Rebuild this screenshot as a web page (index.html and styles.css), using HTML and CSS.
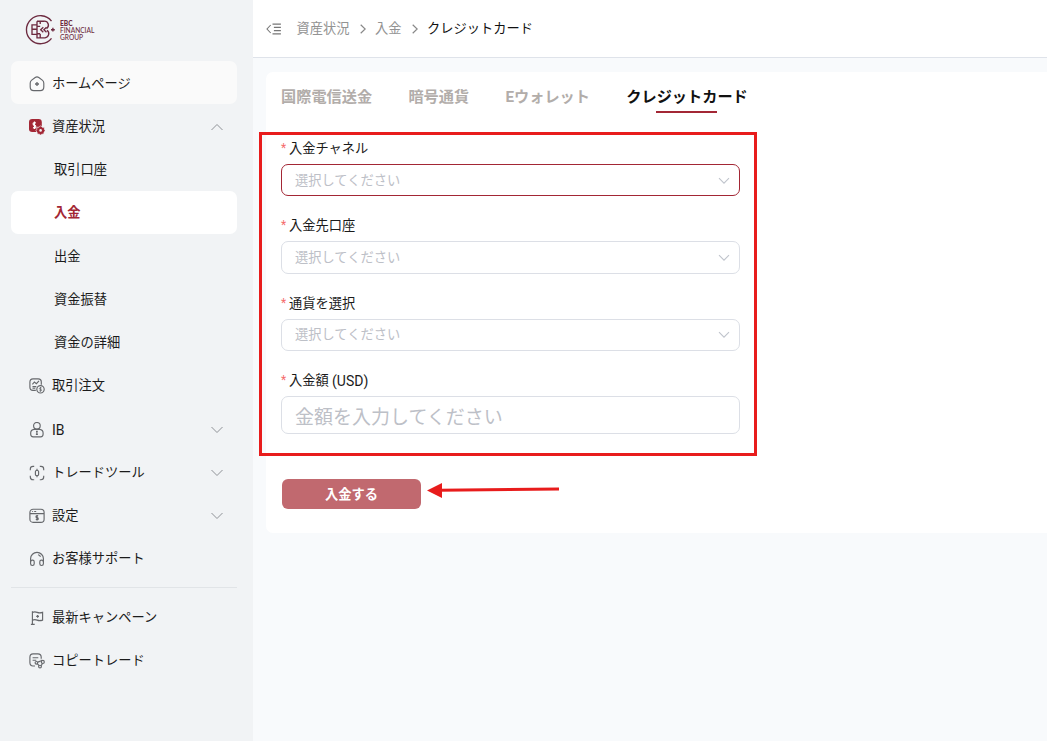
FILE: index.html
```html
<!DOCTYPE html>
<html lang="ja">
<head>
<meta charset="utf-8">
<title>クレジットカード</title>
<link rel="stylesheet" href="styles.css">
</head>
<body>
<div class="app">
  <aside class="sidebar">
    <div class="logo">
      <svg class="logo-mark" viewBox="0 0 32 32">
        <path d="M26.5 7.1A14 14 0 1 0 26.5 24.3"/>
        <path d="M12 7.2h7.3a4 4 0 0 1 2.2 7.4M12 7.2v5.2h3.2M12 12.2v11.6h8a4.2 4.2 0 0 0 2-7.6M12 10.8H7v9.5h5M7 15.2h5M15.2 8v2M15.2 20v3.5M12 19.7h3.2"/>
        <path d="M18.3 13.2l-2.6 2.5 2.6 2.5M21.5 13.2l-2.6 2.5 2.6 2.5"/>
        <path d="M27.9 13.8v3.8M26 15.7h3.8"/>
      </svg>
      <div class="logo-text"><b>EBC</b><span>FINANCIAL</span><span>GROUP</span></div>
    </div>
    <nav class="nav">
      <a class="item home">
        <svg class="icon" viewBox="0 0 16 16"><path d="M6.2 1.5Q8 .2 9.8 1.5L13.6 4.4Q14.8 5.4 14.8 7.2V11Q14.8 14.6 11.2 14.6H4.8Q1.2 14.6 1.2 11V7.2Q1.2 5.4 2.4 4.4Z"/><path d="M8 6v4M6 8h4" stroke-width="1.3"/></svg>
        <span>ホームページ</span>
      </a>
      <a class="item">
        <svg class="icon solid" viewBox="0 0 16 16"><rect x="0" y="0" width="12.8" height="13" rx="3.2" fill="#a32735" stroke="none"/><path d="M6.9 3.9Q4.1 3.1 4.1 4.7T5.5 6.3T6.9 8T4 8.6M5.5 2.4v7.6"  stroke="#fff"/><path d="M11.6 6.7l1.5 1.5 2.2.1.1 2.1.9 1.4-1.2 1.3-.3 2-2 .1-1.2.9-1.3-.9-2-.1-.3-2-1.1-1.3.9-1.5.1-2 2.2-.1z" fill="#a32735" stroke="#f1f3f5" stroke-width=".7"/><circle cx="11.6" cy="11.4" r="1.3" fill="#f1f3f5" stroke="none"/></svg>
        <span>資産状況</span>
        <svg class="chev" viewBox="0 0 12 8"><path d="M.5 7L6 1.5 11.5 7"/></svg>
      </a>
      <a class="item sub">取引口座</a>
      <a class="item sub active">入金</a>
      <a class="item sub">出金</a>
      <a class="item sub">資金振替</a>
      <a class="item sub">資金の詳細</a>
      <a class="item">
        <svg class="icon" viewBox="0 0 16 16"><path d="M6.8 12.3H4Q.9 12.3.9 9.2V4Q.9.8 4 .8h5.2q3.1 0 3.1 3.2v2.7M3.4 6.4l2-2.4 2 1.6 2.6-2.8M3.5 8.6h3.8M3.5 10.2h2.8"/><circle cx="11.5" cy="11.3" r="3.7"/><path d="M12.6 9.9q-2.2-.6-2.2.5t1.1 1 1.1 1-2.3.4M11.5 9v4.6" stroke-width=".8"/></svg>
        <span>取引注文</span>
      </a>
      <a class="item">
        <svg class="icon" viewBox="0 0 16 16"><circle cx="7.9" cy="3.8" r="3.3"/><path d="M5.2 7.4h5.4q3.5.5 3.5 3.5v1.4q0 2.5-2.5 2.5H4.2q-2.5 0-2.5-2.5v-1.4q0-3 3.5-3.5zM7.9 9.2v3.3M7 9.3h1.8M6.9 12.4h2"/></svg>
        <span class="latin">IB</span>
        <svg class="chev" viewBox="0 0 12 8"><path d="M.5 1L6 6.5 11.5 1"/></svg>
      </a>
      <a class="item">
        <svg class="icon" viewBox="0 0 16 16"><path d="M1.3 5.3V4q0-2.7 2.7-2.7h1.2M10.8 1.3H12q2.7 0 2.7 2.7v1.3M14.7 10.7V12q0 2.7-2.7 2.7h-1.2M5.2 14.7H4Q1.3 14.7 1.3 12v-1.3M8 3.7v1.8M8 10.5v1.8"/><rect x="6.4" y="5.5" width="3.2" height="5" rx="1"/></svg>
        <span>トレードツール</span>
        <svg class="chev" viewBox="0 0 12 8"><path d="M.5 1L6 6.5 11.5 1"/></svg>
      </a>
      <a class="item">
        <svg class="icon" viewBox="0 0 16 16"><rect x=".9" y="1.2" width="14.2" height="13.2" rx="3.2"/><path d="M1 5.6h14M3.2 3.5h.9M5.2 3.5h2M9.2 7.8Q7 7.4 7 8.6t1.1 1.1 1.1 1.2-2.4.5M8.1 7v5.6"/></svg>
        <span>設定</span>
        <svg class="chev" viewBox="0 0 12 8"><path d="M.5 1L6 6.5 11.5 1"/></svg>
      </a>
      <a class="item">
        <svg class="icon" viewBox="0 0 16 16"><path d="M1.6 11V7.6a6.4 6.2 0 0 1 12.8 0V11"/><rect x="1.6" y="9.1" width="3.6" height="5.4" rx="1.7"/><rect x="10.8" y="9.1" width="3.6" height="5.4" rx="1.7"/><path d="M9 3.7q1.9.4 2.5 2.1"/></svg>
        <span>お客様サポート</span>
      </a>
    </nav>
    <div class="divider"></div>
    <nav class="nav">
      <a class="item">
        <svg class="icon" viewBox="0 0 16 16"><path d="M3.4 1.2v13M1.9 14.4h3.8M3.4 2.4q2.4-1 4.8 0t5.4 0v7.7q-3 1-5.4 0t-4.8 0" /><path d="M8.6 4.9v2.8M7.2 6.3H10" stroke-width="1.2"/></svg>
        <span>最新キャンペーン</span>
      </a>
      <a class="item">
        <svg class="icon" viewBox="0 0 16 16"><path d="M6 13H4Q.9 13 .9 9.6V4.2Q.9.9 4 .9h4.9Q12.2.9 12.2 4.2v1.6M3.6 4.7h5.7M3.6 7.2h3.7"/><circle cx="7.4" cy="9.8" r="1.3"/><circle cx="11" cy="13.6" r="1.4"/><path d="M8.3 10.7l1.8 1.9M12.2 12.8l1.2-2.4M12.2 6.7l.1 1.4M8.6 9.1l3-1"/><circle cx="13.8" cy="8.9" r="1.5"/></svg>
        <span>コピートレード</span>
      </a>
    </nav>
  </aside>
  <main class="main">
    <header class="header">
      <svg class="fold" viewBox="0 0 16 12"><path d="M4.7 2L1 6l3.7 4M6.5 1.1h8.4M7.9 4.4h7M7.9 7.6h7M6.5 10.9h8.4"/></svg>
      <span class="crumb">資産状況</span>
      <svg class="sep" viewBox="0 0 6 10"><path d="M.7.7L5.2 5 .7 9.3"/></svg>
      <span class="crumb">入金</span>
      <svg class="sep" viewBox="0 0 6 10"><path d="M.7.7L5.2 5 .7 9.3"/></svg>
      <span class="crumb current">クレジットカード</span>
    </header>
    <section class="card">
      <div class="tabs">
        <span class="tab">国際電信送金</span>
        <span class="tab">暗号通貨</span>
        <span class="tab">Eウォレット</span>
        <span class="tab selected">クレジットカード</span>
      </div>
      <form class="form">
        <div class="field">
          <label><i>*</i>入金チャネル</label>
          <div class="control focus"><span>選択してください</span><svg viewBox="0 0 12 8"><path d="M1 1.2l5 5 5-5"/></svg></div>
        </div>
        <div class="field">
          <label><i>*</i>入金先口座</label>
          <div class="control"><span>選択してください</span><svg viewBox="0 0 12 8"><path d="M1 1.2l5 5 5-5"/></svg></div>
        </div>
        <div class="field">
          <label><i>*</i>通貨を選択</label>
          <div class="control"><span>選択してください</span><svg viewBox="0 0 12 8"><path d="M1 1.2l5 5 5-5"/></svg></div>
        </div>
        <div class="field">
          <label><i>*</i>入金額&nbsp;<span class="latin">(USD)</span></label>
          <div class="control large"><span>金額を入力してください</span></div>
        </div>
        <div class="submit">入金する</div>
      </form>
    </section>
  </main>
  <div class="highlight"></div>
  <svg class="arrow" viewBox="0 0 134 16"><path d="M12 8.3L132 7" stroke="#e81c1c" stroke-width="3"/><path d="M0 8.5L15 1v15z" fill="#e81c1c"/></svg>
</div>
</body>
</html>
```
FILE: styles.css
```css
* { box-sizing: border-box; }
body { margin: 0; background: #f8fafc; }
svg { display: block; fill: none; flex: none; }
.app {
  position: relative; display: flex; width: 1047px; height: 741px; overflow: hidden;
  font-family: Roboto, "Noto Sans CJK JP", sans-serif; font-size: 13.25px; line-height: 20px; color: #1b1b1b;
  white-space: nowrap;
}
.sidebar { width: 253px; flex: none; background: #f1f3f5; padding: 0 16px 0 11px; }
.logo { height: 61px; padding: 14px 0 0 14px; display: flex; gap: 3px; }
.logo-mark { width: 32px; height: 32px; stroke: #6d2b40; stroke-width: 1.35; }
.logo-text { display: flex; flex-direction: column; padding-top: 6px; font-size: 6.6px; line-height: 7px; color: #6d2b40; font-family: Lato, sans-serif; font-weight: 500; }
.logo-text b { font-weight: 900; }
.item { display: flex; align-items: center; height: 43.25px; padding: 2px 14px 0 18px; border-radius: 7px; }
.item .icon { width: 16px; height: 16px; margin-right: 7px; stroke: #66686c; stroke-width: 1.15; }
.home { background: #fafafa; }
.sub { padding-left: 43px; }
.active { background: #fff; color: #a32735; font-weight: 700; }
.latin { font-size: 14px; }
.chev { width: 12px; height: 8px; margin-left: auto; stroke: #8e9196; stroke-width: 1; }
.divider { height: 1px; margin: 7px 0 7.5px; background: #e1e4e7; }
.main { flex: 1; min-width: 0; }
.header { height: 58px; background: #fff; border-bottom: 1px solid #dfe3ea; display: flex; align-items: center; padding-left: 13px; }
.fold { width: 16px; height: 12px; stroke: #777; stroke-width: 1.1; margin-right: 14.5px; }
.crumb { color: #939393; }
.current { color: #111; }
.sep { width: 6px; height: 10px; margin: 0 9.5px 0 10px; stroke: #888; stroke-width: 1.2; }
.card { height: 461px; margin: 14px 0 0 13px; background: #fff; border-radius: 7px 0 0 7px; padding: 0 0 0 15px; }
.tabs { display: flex; height: 65px; gap: 36.3px; font-size: 15.2px; font-weight: 700; color: #b2adaa; }
.tab { position: relative; height: 41px; line-height: 51px; }
.selected { color: #111; }
.selected::after { content: ""; position: absolute; left: 30px; top: 39px; width: 61px; height: 2px; background: #a32735; }
.field { width: 459px; height: 77.4px; }
.field label { display: flex; height: 27px; line-height: 24px; }
.field i { width: 8px; font-style: normal; color: #f56c6c; font-size: 12px; line-height: 22px; }
.control { display: flex; align-items: center; justify-content: space-between; height: 32.4px; padding: 1px 9px 0 13px; border: 1px solid #dcdfe6; border-radius: 7px; color: #bdc0c7; }
.control svg { width: 12px; height: 8px; stroke: #c0c4cc; stroke-width: 1.1; }
.focus { border-color: #a32735; }
.large { height: 38px; font-size: 19px; padding-top: 5px; }
.submit { width: 139px; height: 30px; margin: 32px 0 0 1px; background: #c1696f; border-radius: 6px; color: #fff; font-weight: 700; text-align: center; line-height: 31px; }
.highlight { position: absolute; left: 259px; top: 132px; width: 498px; height: 324px; border: 3px solid #e81c1c; }
.arrow { position: absolute; left: 427px; top: 482px; width: 134px; height: 16px; }
```
